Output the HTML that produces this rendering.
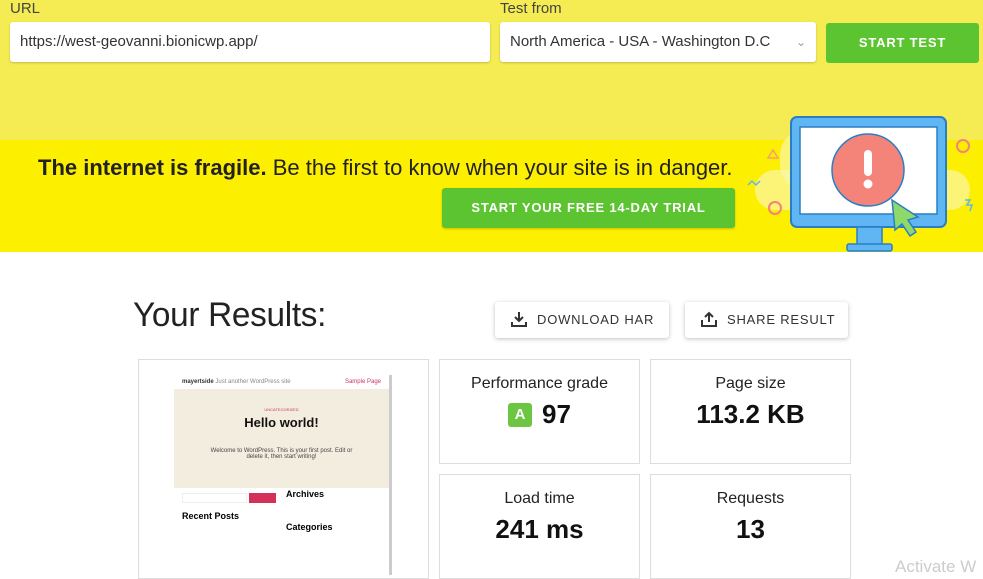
<!DOCTYPE html>
<html><head><meta charset="utf-8"><style>
*{box-sizing:border-box;margin:0;padding:0}
body{width:983px;height:567px;overflow:hidden;background:#fff;font-family:"Liberation Sans",Arial,sans-serif;position:relative}
.abs{position:absolute}
.top{left:0;top:0;width:983px;height:140px;background:#f4ec52}
.band{left:0;top:140px;width:983px;height:112px;background:#fdef00}
.lbl{font-size:15px;color:#444}
.inp{background:#fff;border-radius:3px;box-shadow:0 1px 2px rgba(0,0,0,.2);font-size:15px;color:#333;padding-left:10px;line-height:40px}
.btn{background:#5cc431;color:#fff;font-weight:bold;font-size:13px;letter-spacing:.8px;text-align:center;border-radius:3px}
.card{border:1px solid #ddd;background:#fff;text-align:center}
.card .t{font-size:16px;color:#222;margin-top:15px}
.card .v{font-size:26px;font-weight:bold;color:#111;margin-top:6px}
.wb{background:#fff;border-radius:3px;box-shadow:0 1px 4px rgba(0,0,0,.25);font-size:13px;letter-spacing:.8px;color:#333;line-height:36px}
</style></head><body>
<div class="abs top"></div>
<div class="abs band"></div>
<div class="abs lbl" style="left:10px;top:0">URL</div>
<div class="abs lbl" style="left:500px;top:0">Test from</div>
<div class="abs inp" style="left:10px;top:22px;width:480px;height:40px">https://west-geovanni.bionicwp.app/</div>
<div class="abs inp" style="left:500px;top:22px;width:316px;height:40px">North America - USA - Washington D.C<span style="position:absolute;right:10px;color:#999;font-size:12px">&#8964;</span></div>
<div class="abs btn" style="left:826px;top:23px;width:153px;height:40px;line-height:40px">START TEST</div>
<div class="abs" style="left:38px;top:155px;font-size:22px;color:#222;white-space:nowrap"><b>The internet is fragile.</b> Be the first to know when your site is in danger.</div>
<div class="abs btn" style="left:442px;top:188px;width:293px;height:40px;line-height:40px;box-shadow:0 1px 2px rgba(0,0,0,.2)">START YOUR FREE 14-DAY TRIAL</div>
<svg class="abs" style="left:740px;top:110px" width="243" height="145" viewBox="0 0 243 145">
<rect x="40" y="20" width="165" height="60" rx="25" fill="#f9f6a8" opacity=".7"/>
<rect x="15" y="60" width="215" height="40" rx="20" fill="#f9f6a8" opacity=".7"/>
<rect x="51" y="7" width="155" height="110" rx="6" fill="#5fb6f2" stroke="#2a7fc4" stroke-width="2"/>
<rect x="60" y="17" width="137" height="87" fill="#fff" stroke="#2a7fc4" stroke-width="1.5"/>
<rect x="117" y="117" width="25" height="18" fill="#5fb6f2" stroke="#2a7fc4" stroke-width="1.5"/>
<rect x="107" y="134" width="45" height="7" rx="2" fill="#5fb6f2" stroke="#2a7fc4" stroke-width="1.5"/>
<circle cx="128" cy="60" r="36" fill="#f4837a" stroke="#2a7fc4" stroke-width="1.5"/>
<rect x="124" y="40" width="8" height="26" rx="4" fill="#fff"/><circle cx="128" cy="74" r="4.5" fill="#fff"/>
<path d="M152 90 L178 107 L168 110 L176 122 L170 126 L162 114 L155 120 Z" fill="#8fd86a" stroke="#2a7fc4" stroke-width="1.5"/>
<circle cx="35" cy="98" r="6" fill="none" stroke="#f4837a" stroke-width="2"/>
<circle cx="223" cy="36" r="6" fill="none" stroke="#f4837a" stroke-width="2"/>
<path d="M28 48 L33 40 L38 48 Z" fill="none" stroke="#f4a070" stroke-width="1.5"/>
<path d="M8 75 l4 -4 l4 4 l4 -4" fill="none" stroke="#5fb6f2" stroke-width="1.5"/>
<path d="M225 90 l5 0 l-3 5 l5 0 l-2 6" fill="none" stroke="#5fb6f2" stroke-width="1.5"/>
</svg>
<div class="abs" style="left:133px;top:296px;font-size:34px;color:#222;letter-spacing:-0.3px;transform:scaleX(.98);transform-origin:left">Your Results:</div>
<div class="abs wb" style="left:495px;top:302px;width:174px;height:36px;padding-left:42px">DOWNLOAD HAR</div>
<svg class="abs" style="left:510px;top:310px" width="18" height="18"><path d="M9 2v8M5 7l4 4 4-4M2 12v4h14v-4" fill="none" stroke="#333" stroke-width="2"/></svg>
<div class="abs wb" style="left:685px;top:302px;width:163px;height:36px;padding-left:42px">SHARE RESULT</div>
<svg class="abs" style="left:700px;top:310px" width="18" height="18"><path d="M9 12V4M5 7l4-4 4 4M2 10v6h14v-6" fill="none" stroke="#333" stroke-width="2"/></svg>
<div class="abs card" style="left:138px;top:359px;width:291px;height:220px">
 <div class="abs" style="left:35px;top:15px;width:218px;height:200px;background:#fff;border-right:3px solid #ccc">
  <div style="font-size:6px;text-align:left;padding:4px 8px;color:#333"><b>mayertside</b> <span style="color:#888">Just another WordPress site</span><span style="float:right;color:#c36">Sample Page</span></div>
  <div style="background:#f3eddf;height:99px;text-align:center;padding-top:18px">
   <div style="font-size:4px;color:#c36">UNCATEGORIZED</div>
   <div style="font-size:13px;font-weight:bold;color:#111;margin-top:3px">Hello world!</div>
   <div style="font-size:6px;color:#444;margin-top:18px">Welcome to WordPress. This is your first post. Edit or<br>delete it, then start writing!</div>
  </div>
  <div style="position:absolute;left:8px;top:118px;width:65px;height:10px;border:1px solid #eee"></div>
  <div style="position:absolute;left:75px;top:118px;width:27px;height:10px;background:#d2325a"></div>
  <div style="position:absolute;left:8px;top:136px;font-size:9px;font-weight:bold">Recent Posts</div>
  <div style="position:absolute;left:112px;top:114px;font-size:9px;font-weight:bold">Archives</div>
  <div style="position:absolute;left:112px;top:147px;font-size:9px;font-weight:bold">Categories</div>
 </div>
</div>
<div class="abs card" style="left:439px;top:359px;width:201px;height:105px"><div class="t">Performance grade</div><div class="v"><span style="display:inline-block;width:24px;height:24px;background:#6cc644;color:#fff;font-size:15px;line-height:24px;border-radius:3px;vertical-align:4px;margin-right:10px">A</span>97</div></div>
<div class="abs card" style="left:650px;top:359px;width:201px;height:105px"><div class="t">Page size</div><div class="v">113.2 KB</div></div>
<div class="abs card" style="left:439px;top:474px;width:201px;height:105px"><div class="t">Load time</div><div class="v">241 ms</div></div>
<div class="abs card" style="left:650px;top:474px;width:201px;height:105px"><div class="t">Requests</div><div class="v">13</div></div>
<div class="abs" style="left:895px;top:557px;font-size:17px;color:#ccc">Activate W</div>
</body></html>
